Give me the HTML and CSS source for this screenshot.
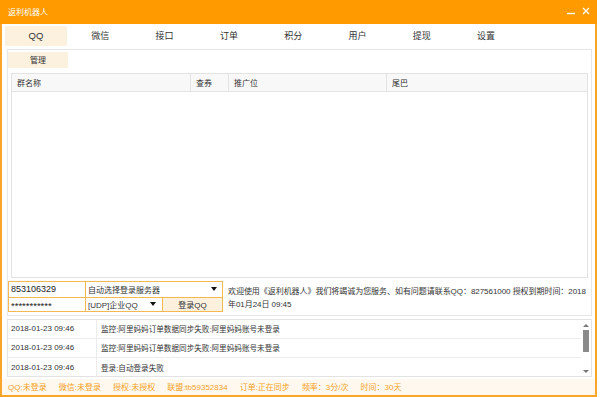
FILE: index.html
```html
<!DOCTYPE html>
<html lang="zh">
<head>
    <meta charset="UTF-8">
    <title>返利机器人</title>
    <link rel="stylesheet" href="styles.css">
</head>
<body>
<div class="window">
    <div class="titlebar">
        <span class="title">返利机器人</span>
        <div class="controls">
            <svg width="10" height="10" viewBox="0 0 10 10"><path d="M1 7.5h8" stroke="#fff" stroke-width="1.4"/></svg>
            <svg width="10" height="10" viewBox="0 0 10 10"><path d="M2 2l6 6M8 2l-6 6" stroke="#fff" stroke-width="1.3"/></svg>
        </div>
    </div>

    <div class="main">
        <div class="tabs">
            <div class="tab active">QQ</div>
            <div class="tab">微信</div>
            <div class="tab">接口</div>
            <div class="tab">订单</div>
            <div class="tab">积分</div>
            <div class="tab">用户</div>
            <div class="tab">提现</div>
            <div class="tab">设置</div>
        </div>

        <div class="panel">
            <div class="subtabs"><div class="subtab">管理</div></div>

            <div class="grid">
                <div class="grid-head">
                    <div class="col c-name">群名称</div>
                    <div class="col c-quan">查券</div>
                    <div class="col c-pos">推广位</div>
                    <div class="col c-tail">尾巴</div>
                </div>
                <div class="grid-body"></div>
            </div>

            <div class="login-row">
                <div class="login-box">
                    <div class="lrow">
                        <div class="cell c-user">853106329</div>
                        <div class="cell c-server">自动选择登录服务器<span class="arrow"></span></div>
                    </div>
                    <div class="lrow">
                        <div class="cell c-user pass">***********</div>
                        <div class="cell c-type">[UDP]企业QQ<span class="arrow"></span></div>
                        <div class="cell c-btn">登录QQ</div>
                    </div>
                </div>
                <div class="welcome">欢迎使用《返利机器人》我们将竭诚为您服务、如有问题请联系QQ：827561000 授权到期时间：2018年01月24日 09:45</div>
            </div>
        </div>

        <div class="log">
            <div class="log-rows">
                <div class="log-row"><div class="t">2018-01-23 09:46</div><div class="m">监控:阿里妈妈订单数据同步失败:阿里妈妈账号未登录</div></div>
                <div class="log-row"><div class="t">2018-01-23 09:46</div><div class="m">监控:阿里妈妈订单数据同步失败:阿里妈妈账号未登录</div></div>
                <div class="log-row"><div class="t">2018-01-23 09:46</div><div class="m">登录:自动登录失败</div></div>
            </div>
            <div class="scrollbar">
                <span class="up"></span>
                <span class="thumb"></span>
                <span class="down"></span>
            </div>
        </div>
    </div>

    <div class="status">
        <span>QQ:未登录</span>
        <span>微信:未登录</span>
        <span>授权:未授权</span>
        <span>联盟:tb59352834</span>
        <span>订单:正在同步</span>
        <span>频率：3分/次</span>
        <span>时间：30天</span>
    </div>
</div>
</body>
</html>
```

FILE: styles.css
```css
* { margin: 0; padding: 0; box-sizing: border-box; }
body { font-family: "Liberation Sans", "Noto Sans CJK SC", sans-serif; font-size: 8px; color: #333; background: #fff; }

.window {
    width: 597px;
    height: 397px;
    border: 2px solid #f9a52a;
    border-top: none;
    display: flex;
    flex-direction: column;
    background: #fff;
}

.titlebar {
    height: 25px;
    margin: 0 -2px;
    background: #ff9a00;
    display: flex;
    align-items: center;
    justify-content: space-between;
    padding: 0 6px 0 8px;
    color: #fff;
}
.title { font-size: 8px; }
.controls { display: flex; gap: 5px; margin-top: -2px; }

.main { flex: 1; padding: 2px 3px 0 5px; display: flex; flex-direction: column; }

.tabs { display: flex; gap: 2.3px; height: 20px; margin-left: -2px; }
.tab {
    width: 62px;
    display: flex; align-items: center; justify-content: center;
    font-size: 9px;
}
.tab.active { background: #fcf0df; font-size: 9.5px; }

.panel {
    margin-top: 3px;
    height: 267px;
    border: 1px solid #e6e6e6;
    display: flex;
    flex-direction: column;
}
.subtabs { display: flex; padding-top: 2px; }
.subtab { width: 60px; height: 16px; background: #fcf0df; display: flex; align-items: center; justify-content: center; }

.grid { margin: 5px 3px 0 3px; height: 205px; border: 1px solid #e3e3e3; display: flex; flex-direction: column; }
.grid-head { display: flex; height: 18px; background: #f8f8f8; border-bottom: 1px solid #e3e3e3; }
.col { display: flex; align-items: center; padding-left: 5px; border-right: 1px solid #e3e3e3; }
.c-name { width: 179px; }
.c-quan { width: 38px; }
.c-pos { width: 158px; }
.c-tail { flex: 1; border-right: none; }
.grid-body { flex: 1; }

.login-row { display: flex; margin-top: 3px; }
.login-box { width: 215px; height: 31px; border: 1px solid #f7b751; }
.lrow { display: flex; height: 15px; }
.lrow + .lrow { border-top: 1px solid #f7b751; height: 14px; }
.cell { display: flex; align-items: center; padding-left: 2px; position: relative; }
.c-user { width: 77px; border-right: 1px solid #f7b751; font-size: 9px; color: #222; }
.pass { font-size: 9.5px; padding-top: 2px; }
.c-server { flex: 1; }
.c-type { width: 77px; border-right: 1px solid #f7b751; }
.c-btn { flex: 1; justify-content: center; padding: 0; background: #fcf0df; }
.arrow {
    position: absolute; right: 5px; top: 50%;
    margin-top: -2px;
    border-left: 3.5px solid transparent;
    border-right: 3.5px solid transparent;
    border-top: 4px solid #111;
}
.c-type .arrow { right: 6px; }

.welcome { flex: 1; padding: 4px 0 0 5px; line-height: 13px; letter-spacing: -0.05px; }

.log {
    margin-top: 3px;
    height: 58px;
    border: 1px solid #e3e3e3;
    display: flex;
}
.log-rows { flex: 1; }
.log-row { display: flex; height: 19px; border-bottom: 1px solid #ececec; }
.log-row:last-child { border-bottom: none; }
.log-row .t { width: 89px; padding-left: 3px; border-right: 1px solid #ececec; display: flex; align-items: center; }
.log-row .m { padding-left: 4px; display: flex; align-items: center; font-size: 7.6px; }

.scrollbar { width: 10px; display: flex; flex-direction: column; align-items: center; padding: 4px 0 3px; }
.scrollbar .up, .scrollbar .down { border-left: 3px solid transparent; border-right: 3px solid transparent; }
.scrollbar .up { border-bottom: 3px solid #777; }
.scrollbar .down { border-top: 3px solid #777; margin-top: auto; }
.scrollbar .thumb { width: 6px; height: 22px; background: #8a8a8a; margin-top: 3px; }

.status {
    height: 17px;
    margin-top: 2px;
    background: #fff8ee;
    display: flex;
    align-items: center;
    gap: 12px;
    padding-left: 6px;
    color: #f5a328;
}
```
